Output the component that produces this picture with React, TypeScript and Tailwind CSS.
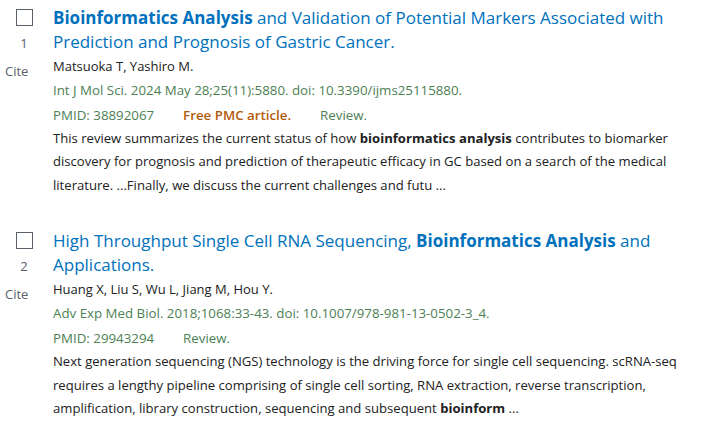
import React from "react";

const font = { fontFamily: '"Open Sans", "Noto Sans", sans-serif' };

function Article({
  n,
  title,
  authors,
  journal,
  pmid,
  free,
  snippet,
}: {
  n: number;
  title: React.ReactNode;
  authors: string;
  journal: string;
  pmid: string;
  free?: boolean;
  snippet: React.ReactNode;
}) {
  return (
    <div className="flex">
      <div className="w-[53px] shrink-0">
        <div className="ml-[16px] mt-[3px] w-[17px] h-[17px] border-[1.5px] border-[#5b616b] bg-white" />
        <div className="text-[13px] leading-[20px] mt-[7px] text-[#5b616b] w-[48px] text-center">{n}</div>
        <div className="text-[13px] leading-[20px] mt-[8px] text-[#5b616b] ml-[5px]">Cite</div>
      </div>
      <div className="flex-1 min-w-0">
        <div className="text-[17px] leading-[24px] text-[#0071bc]">{title}</div>
        <div className="text-[13px] leading-[23px] mt-[1px] text-[#212121]">{authors}</div>
        <div className="text-[13.3px] leading-[25px] text-[#4d8055]">{journal}</div>
        <div className="text-[13.3px] leading-[24px] flex gap-[29px]">
          <span className="text-[#4d8055]">PMID: {pmid}</span>
          {free && <span className="text-[#b45a0c] font-semibold">Free PMC article.</span>}
          <span className="text-[#4d8055]">Review.</span>
        </div>
        <div className="text-[13.1px] leading-[23.4px] text-[#212121] pr-[20px]">{snippet}</div>
      </div>
    </div>
  );
}

export default function App() {
  return (
    <div className="w-[702px] h-[422px] bg-white overflow-hidden pt-[6px]" style={font}>
      <Article
        n={1}
        title={
          <>
            <b className="font-bold">Bioinformatics Analysis</b> and Validation of Potential Markers Associated with
            Prediction and Prognosis of Gastric Cancer.
          </>
        }
        authors="Matsuoka T, Yashiro M."
        journal="Int J Mol Sci. 2024 May 28;25(11):5880. doi: 10.3390/ijms25115880."
        pmid="38892067"
        free
        snippet={
          <>
            This review summarizes the current status of how <b>bioinformatics analysis</b> contributes to biomarker
            discovery for prognosis and prediction of therapeutic efficacy in GC based on a search of the medical
            literature. ...Finally, we discuss the current challenges and futu ...
          </>
        }
      />
      <div className="h-[32px]" />
      <Article
        n={2}
        title={
          <>
            High Throughput Single Cell RNA Sequencing, <b className="font-bold">Bioinformatics Analysis</b> and
            Applications.
          </>
        }
        authors="Huang X, Liu S, Wu L, Jiang M, Hou Y."
        journal="Adv Exp Med Biol. 2018;1068:33-43. doi: 10.1007/978-981-13-0502-3_4."
        pmid="29943294"
        snippet={
          <>
            Next generation sequencing (NGS) technology is the driving force for single cell sequencing. scRNA-seq
            requires a lengthy pipeline comprising of single cell sorting, RNA extraction, reverse transcription,
            amplification, library construction, sequencing and subsequent <b>bioinform</b> ...
          </>
        }
      />
    </div>
  );
}
